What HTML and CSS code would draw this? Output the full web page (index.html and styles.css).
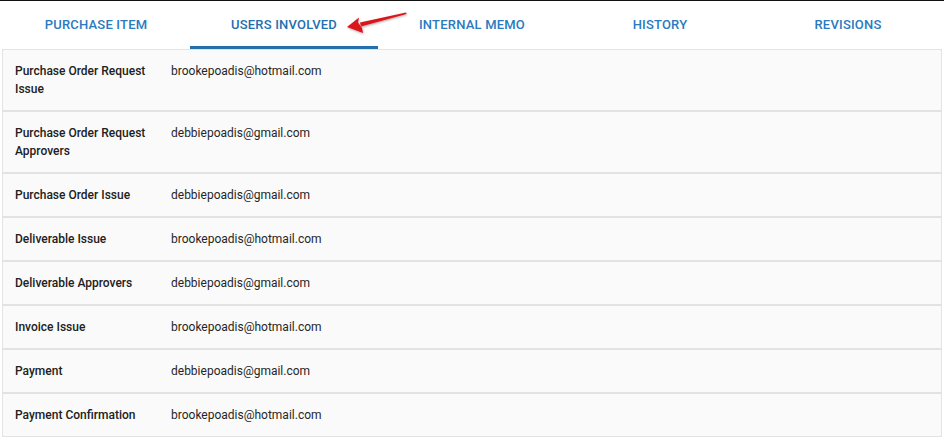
FILE: index.html
```html
<!DOCTYPE html>
<html>
<head>
<meta charset="utf-8">
<link rel="stylesheet" href="styles.css">
</head>
<body>
<div class="page">
  <nav class="tabs">
    <div class="tab">Purchase Item</div>
    <div class="tab active">Users Involved</div>
    <div class="tab">Internal Memo</div>
    <div class="tab">History</div>
    <div class="tab">Revisions</div>
    <svg class="arrow" width="70" height="30" viewBox="0 0 70 30">
      <defs>
        <filter id="sh" x="-20%" y="-40%" width="140%" height="180%">
          <feDropShadow dx="0.5" dy="1" stdDeviation="0.8" flood-color="#000" flood-opacity="0.35"/>
        </filter>
      </defs>
      <g filter="url(#sh)" fill="#d9161b">
        <path d="M64 4.5 L64.6 6 L19 18.5 L18 14.5 Z"/>
        <path d="M5 19 L17 9.5 L16 14.5 L20 20 L21 25 Z"/>
      </g>
    </svg>
  </nav>
  <div class="table">
    <div class="row"><div class="label">Purchase Order Request Issue</div><div class="value">brookepoadis@hotmail.com</div></div>
    <div class="row"><div class="label">Purchase Order Request Approvers</div><div class="value">debbiepoadis@gmail.com</div></div>
    <div class="row"><div class="label">Purchase Order Issue</div><div class="value">debbiepoadis@gmail.com</div></div>
    <div class="row"><div class="label">Deliverable Issue</div><div class="value">brookepoadis@hotmail.com</div></div>
    <div class="row"><div class="label">Deliverable Approvers</div><div class="value">debbiepoadis@gmail.com</div></div>
    <div class="row"><div class="label">Invoice Issue</div><div class="value">brookepoadis@hotmail.com</div></div>
    <div class="row"><div class="label">Payment</div><div class="value">debbiepoadis@gmail.com</div></div>
    <div class="row"><div class="label">Payment Confirmation</div><div class="value">brookepoadis@hotmail.com</div></div>
  </div>
</div>
</body>
</html>
```
FILE: styles.css
```css
html, body {
  margin: 0;
  padding: 0;
  background: #ffffff;
}
body {
  font-family: Roboto, "Noto Sans", Arial, sans-serif;
  width: 944px;
  height: 440px;
  overflow: hidden;
  border-top: 1px solid #111;
  box-sizing: border-box;
}
.page {
  padding: 0 2px 0 2px;
  background: #fff;
}
.tabs {
  position: relative;
  display: grid;
  grid-template-columns: repeat(5, 1fr);
  height: 48px;
  background: #fff;
}
.tab {
  display: flex;
  align-items: center;
  justify-content: center;
  text-transform: uppercase;
  font-size: 13px;
  font-weight: 500;
  letter-spacing: 0.2px;
  color: #2a7ac0;
  padding-top: 1px;
  border-bottom: 2px solid transparent;
  box-sizing: border-box;
}
.tab.active {
  border-bottom: 3px solid #2270ae;
  color: #246fb0;
  padding-top: 2px;
}
.arrow {
  position: absolute;
  left: 340px;
  top: 7px;
}
.table {
  border: 1px solid #e3e3e3;
  background: #fafafa;
  width: 938px;
}
.row {
  display: flex;
  align-items: flex-start;
  padding: 12px 0;
  border-bottom: 2px solid #e2e2e2;
  line-height: 18px;
  font-size: 12px;
}
.row:last-child {
  border-bottom: 0;
}
.label {
  width: 144px;
  padding-left: 12px;
  font-weight: 500;
  color: #212121;
}
.value {
  padding-left: 12px;
  color: #262626;
}
```
